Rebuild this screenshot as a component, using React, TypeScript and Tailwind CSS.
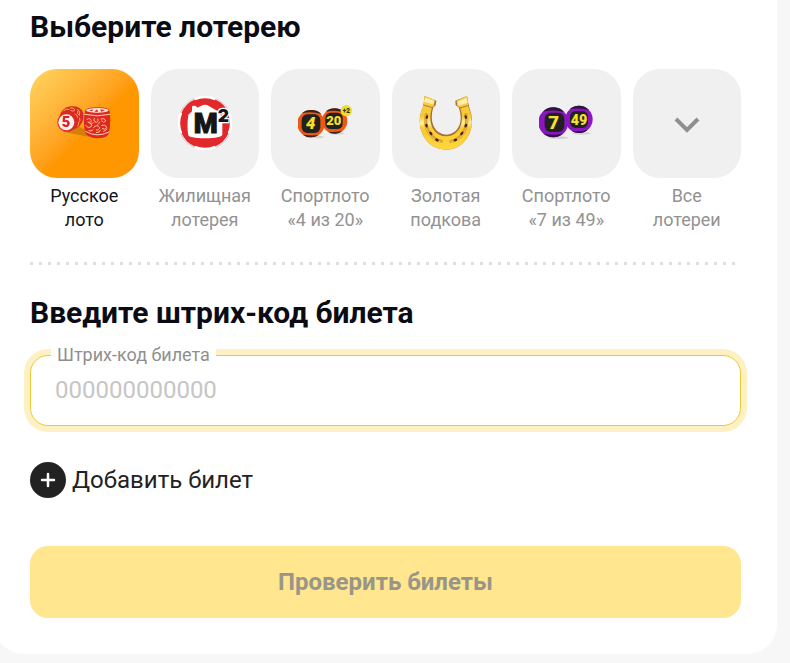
import { useState } from 'react';
import type { ReactNode } from 'react';

interface Lottery {
  id: string;
  title: [string, string];
  icon: ReactNode;
}

const lotteries: Lottery[] = [
  { id: 'rusloto', title: ['Русское', 'лото'], icon: <KegsIcon /> },
  { id: 'housing', title: ['Жилищная', 'лотерея'], icon: <HouseIcon /> },
  { id: '4x20', title: ['Спортлото', '«4 из 20»'], icon: <FourTwentyIcon /> },
  { id: 'horseshoe', title: ['Золотая', 'подкова'], icon: <HorseshoeIcon /> },
  { id: '7x49', title: ['Спортлото', '«7 из 49»'], icon: <SevenFortyNineIcon /> },
  { id: 'all', title: ['Все', 'лотереи'], icon: <ChevronIcon /> },
];

export default function App() {
  const [selected, setSelected] = useState('rusloto');
  const [code, setCode] = useState('');

  return (
    <div className="min-h-screen bg-[#f7f7f7] pb-2 font-['Roboto',sans-serif]">
      <main className="-ml-1.5 mr-[13px] rounded-b-[30px] bg-white pt-[9px] pr-9 pb-9 pl-9">
        <h1 className="text-[30px] leading-9 font-bold text-[#0b0b14]">Выберите лотерею</h1>

        <div className="mt-6 grid grid-cols-6 gap-3">
          {lotteries.map((item) => (
            <LotteryButton
              key={item.id}
              item={item}
              active={item.id === selected}
              onClick={() => setSelected(item.id)}
            />
          ))}
        </div>

        {/* Dotted divider */}
        <div className="mt-[30px] h-[3px] bg-[repeating-linear-gradient(90deg,#dedede_0_3px,transparent_3px_9px)]" />

        <h2 className="mt-[30px] text-[30px] leading-9 font-bold text-[#0b0b14]">Введите штрих-код билета</h2>

        <form onSubmit={(e) => e.preventDefault()}>
          <div className="relative mt-6">
            <label
              htmlFor="barcode"
              className="absolute -top-3 left-[21px] bg-white px-1.5 text-lg leading-6 text-[#8f8f8f]"
            >
              Штрих-код билета
            </label>
            <input
              id="barcode"
              type="text"
              inputMode="numeric"
              value={code}
              onChange={(e) => setCode(e.target.value)}
              placeholder="000000000000"
              className="block h-[71px] w-full rounded-[18px] border border-[#e9cb38] bg-white px-6 text-2xl text-[#222] ring-6 ring-[#fdf1c3] outline-none placeholder:text-[#c6c6c6]"
            />
          </div>

          <button type="button" className="mt-9 flex items-center gap-1.5 text-2xl leading-9 text-[#222]">
            <PlusIcon />
            Добавить билет
          </button>

          <button
            type="submit"
            className="mt-12 h-[72px] w-full rounded-[18px] bg-[#ffe68f] text-2xl font-bold text-[#999589]"
          >
            Проверить билеты
          </button>
        </form>
      </main>
    </div>
  );
}

function LotteryButton({ item, active, onClick }: { item: Lottery; active: boolean; onClick: () => void }) {
  return (
    <button type="button" onClick={onClick} className="flex flex-col text-center text-lg leading-6">
      <span
        className={
          active
            ? 'flex aspect-square w-full items-center justify-center rounded-[27px] bg-linear-135 from-[#ffd760] to-[#ff9800] to-55%'
            : 'flex aspect-square w-full items-center justify-center rounded-[27px] bg-[#f0f0f0]'
        }
      >
        {item.icon}
      </span>
      <span className={active ? 'mt-1.5 w-full text-[#14141c]' : 'mt-1.5 w-full text-[#929292]'}>
        {item.title[0]}
        <br />
        {item.title[1]}
      </span>
    </button>
  );
}

function KegsIcon() {
  return (
    <svg className="size-[54px]" viewBox="0 0 162 162" aria-hidden="true">
      <path d="M16 100 L66 92 L92 104 L96 122 Q60 116 20 108Z" fill="#c97806" opacity=".8" />
      {/* lying keg */}
      <path d="M6 66 Q12 36 40 31 Q68 28 78 48 Q84 74 66 92 L36 108Z" fill="#d92a22" />
      <g fill="none" stroke="#f3a868" strokeWidth="3" strokeLinecap="round">
        <path d="M20 44 q8-8 16-4 M40 36 q12-2 14 6 q-6 6-12 2 M62 40 q10 8 5 18 q-8-4-5-12" />
        <path d="M54 54 q8 2 8 10 M68 66 q4 8-3 14 M62 90 q4-4 3-8" />
      </g>
      <circle cx="29" cy="79" r="28" fill="#e02a26" />
      <circle cx="28" cy="79" r="24" fill="#fff2ee" />
      <text
        x="27"
        y="94"
        textAnchor="middle"
        fill="#d9202a"
        className="font-['Roboto',sans-serif] text-[44px] font-black"
      >
        5
      </text>
      {/* standing keg */}
      <path d="M84 46 Q84 34 121 34 Q158 34 158 46 Q163 82 155 114 Q148 127 119 127 Q91 124 85 110 Q77 82 84 46Z" fill="#dc2a22" />
      <ellipse cx="121" cy="43" rx="34" ry="7" fill="#ffe6dc" />
      <path d="M96 44 l12-4 l-2 6z M112 47 l8-7 l4 7z M130 40 l14 3 l-12 4z" fill="#d6261f" />
      <path d="M83 55 Q120 64 159 55 M85 106 Q120 126 156 108" fill="none" stroke="#ffcfb0" strokeWidth="3" />
      <g fill="none" stroke="#fbc489" strokeWidth="3" strokeLinecap="round">
        <path d="M90 70 q10-6 13 4 q-2 8-10 4 M112 67 q-4 10 6 12 q8-2 4-10 M132 69 q12-4 14 6 q-6 8-12 0" />
        <path d="M86 88 q8 12 18 2 q2-8-6-8 M110 94 q10-10 18 0 q-2 10-10 8 M134 88 q10-4 16 6 q-6 10-14 4" />
        <path d="M96 104 q6 4 12-2 M118 110 q10 0 12-7 M140 106 q6-2 10-7 M122 86 q4-3 6-8 M104 82 q4 2 6-2" />
      </g>
    </svg>
  );
}

function HouseIcon() {
  return (
    <svg className="size-[54px]" viewBox="0 0 162 162" aria-hidden="true">
      <circle cx="81" cy="81" r="80" fill="#fff" stroke="#c4abab" strokeWidth="2" />
      <circle cx="81" cy="81" r="77" fill="#e3282b" />
      <g fill="none" stroke="#fff" strokeWidth="8">
        <path d="M50 9 A79 79 0 0 1 112 9" />
        <path d="M50 153 A79 79 0 0 0 112 153" />
        <path d="M9 50 A79 79 0 0 0 9 112" />
        <path d="M153 50 A79 79 0 0 1 153 112" />
      </g>
      {/* house */}
      <path
        d="M42 46 L42 32 Q43 27 54 30 L57 35 L75 27 Q81 25 87 27 L124 48 L133 70 V116 Q130 126 81 127 Q34 126 31 118 Q26 92 31 56Z"
        fill="#fff"
      />
      <text
        x="83"
        y="112"
        textAnchor="middle"
        fill="#151515"
        stroke="#151515"
        strokeWidth="3"
        className="font-['Roboto',sans-serif] text-[82px] font-black"
      >
        M
      </text>
      <text
        x="136"
        y="77"
        textAnchor="middle"
        fill="#151515"
        stroke="#fff"
        strokeWidth="7"
        paintOrder="stroke"
        className="font-['Inter',sans-serif] text-[52px] font-black"
      >
        2
      </text>
    </svg>
  );
}

function FourTwentyIcon() {
  return (
    <svg className="size-[54px]" viewBox="0 0 162 162" aria-hidden="true">
      <ellipse cx="50" cy="123" rx="28" ry="4" fill="#d2d2d2" />
      <ellipse cx="116" cy="112" rx="24" ry="4" fill="#d2d2d2" />
      <circle cx="110" cy="75" r="38" fill="#ea5a14" />
      <path d="M84 47 Q94 37 110 37 Q128 37 138 49 Q112 40 84 47Z M90 107 Q114 110 134 104 Q124 113 111 113 Q98 113 90 107Z" fill="#3c211b" />
      <rect x="82" y="50" width="52" height="49" rx="16" fill="#23211f" />
      <circle cx="39" cy="83" r="41" fill="#ea5a14" />
      <path d="M12 52 Q22 41 42 42 Q60 42 70 54 Q40 45 12 52Z M14 116 Q40 120 62 117 Q52 124 39 124 Q24 124 14 116Z" fill="#3c211b" />
      <rect x="11" y="55" width="56" height="56" rx="17" fill="#23211f" />
      <circle cx="145" cy="44" r="17" fill="#f0dc2b" />
      <g fill="#f5e02c" textAnchor="middle" className="font-['Roboto',sans-serif] font-black">
        <text x="38" y="100" className="text-[50px] italic">4</text>
        <text x="107" y="88" className="text-[39px]">20</text>
      </g>
      <text x="145" y="51" textAnchor="middle" fill="#2e2a12" className="font-['Roboto',sans-serif] text-[19px] font-black">
        +2
      </text>
    </svg>
  );
}

function HorseshoeIcon() {
  return (
    <svg className="size-[54px]" viewBox="0 0 162 162" aria-hidden="true">
      <defs>
        <linearGradient id="gold" x1="0" y1="0" x2="0" y2="1">
          <stop stopColor="#f6cf45" />
          <stop offset=".38" stopColor="#f6c935" />
          <stop offset=".5" stopColor="#fff0a4" />
          <stop offset=".6" stopColor="#f8cb30" />
          <stop offset="1" stopColor="#ffd83c" />
        </linearGradient>
      </defs>
      {/* inner bevel */}
      <path
        d="M17 0 L52 14 L50 28 L43 34 Q33 66 44 91 Q56 116 82 116 Q108 115 120 91 Q131 64 119 34 L110 28 L109 14 L144 0 L150 32 Q168 76 150 116 Q126 160 81 161 Q34 159 11 116 Q-8 75 13 30Z"
        fill="#a96f35"
      />
      <path
        d="M17 0 L47 11 L45 29 L39 34 Q28 70 40 95 Q55 121 82 121 Q110 120 123 95 Q135 66 123 34 L115 30 L113 14 L144 0 L148 32 Q168 76 150 116 Q126 160 81 161 Q34 159 11 116 Q-8 75 13 30Z"
        fill="url(#gold)"
      />
      <path d="M19 5 L46 15 L43 25 L15 18Z M116 17 L143 6 L146 20 L119 29Z" fill="#fff1ac" />
      <path d="M13 27 L41 35 M120 37 L149 28" stroke="#b77b25" strokeWidth="3" />
      {/* grooves with nail holes */}
      <g fill="none" strokeLinecap="round">
        <path
          d="M22 56 Q15 88 31 112 Q46 133 67 136 M141 56 Q148 88 132 112 Q118 132 96 136"
          stroke="#d79c30"
          strokeWidth="10"
        />
        <path
          d="M20 58 Q14 88 29 113 Q46 135 66 138 M143 58 Q149 88 133 114 Q118 134 97 138"
          stroke="#edbd45"
          strokeWidth="4"
        />
        <path
          d="M24 61 l-1 4 M22 87 l1 4 M34 110 l3 4 M52 131 l4 2 M140 61 l1 4 M141 87 l-1 4 M130 110 l-3 4 M111 131 l-4 2"
          stroke="#49230e"
          strokeWidth="7"
        />
      </g>
    </svg>
  );
}

function SevenFortyNineIcon() {
  return (
    <svg className="size-[54px]" viewBox="0 0 162 162" aria-hidden="true">
      <ellipse cx="58" cy="125" rx="30" ry="4" fill="#d2d2d2" />
      <ellipse cx="128" cy="112" rx="28" ry="4" fill="#d2d2d2" />
      <circle cx="120" cy="70" r="41" fill="#8a16c2" />
      <path d="M92 40 Q102 29 120 29 Q138 29 150 42 Q120 34 92 40Z M98 105 Q124 107 146 101 Q136 111 120 111 Q106 111 98 105Z" fill="#2d153b" />
      <rect x="93" y="45" width="54" height="51" rx="17" fill="#23211f" />
      <circle cx="43" cy="79" r="45" fill="#8a16c2" />
      <path d="M12 47 Q24 34 45 34 Q64 35 75 48 Q44 39 12 47Z M14 113 Q42 119 70 114 Q58 124 43 124 Q24 122 14 113Z" fill="#2d153b" />
      <rect x="17" y="50" width="59" height="58" rx="18" fill="#23211f" />
      <g fill="#f5e02c" textAnchor="middle" className="font-['Roboto',sans-serif] font-black">
        <text x="44" y="100" className="text-[56px]">7</text>
        <text x="120" y="86" className="text-[43px]">49</text>
      </g>
    </svg>
  );
}

function ChevronIcon() {
  return (
    <svg className="size-[54px]" viewBox="0 0 54 54" fill="none" aria-hidden="true">
      <path d="M16 23 L27 34 L38 23" stroke="#8f8f8f" strokeWidth="4" />
    </svg>
  );
}

function PlusIcon() {
  return (
    <svg className="size-9" viewBox="0 0 36 36" fill="none" aria-hidden="true">
      <circle cx="18" cy="18" r="18" fill="#222" />
      <path d="M18 12V24M12 18H24" stroke="#fff" strokeWidth="2.5" strokeLinecap="round" />
    </svg>
  );
}
